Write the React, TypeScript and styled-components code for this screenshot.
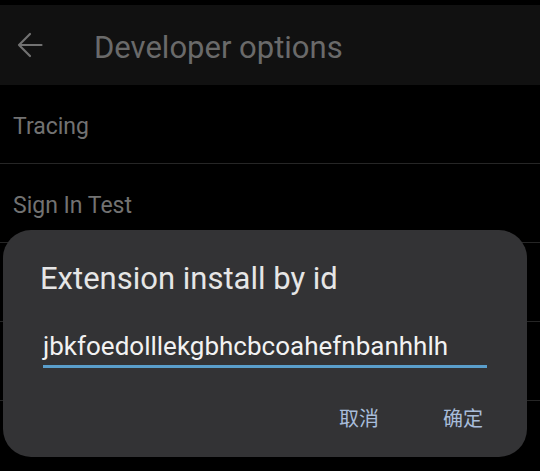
import React from 'react';
import styled, { createGlobalStyle } from 'styled-components';

const GlobalStyle = createGlobalStyle`
  html, body {
    margin: 0;
    padding: 0;
    background: #000;
  }
  body {
    font-family: Roboto, "Noto Sans CJK SC", sans-serif;
  }
`;

const Screen = styled.div`
  position: relative;
  width: 540px;
  height: 471px;
  overflow: hidden;
  background: #000;
`;

const StatusStrip = styled.div`
  height: 5px;
  background: #000;
`;

const AppBar = styled.div`
  height: 80px;
  background: #111111;
  display: flex;
  align-items: center;
  padding-left: 17px;
  gap: 51px;
  color: #6a6a6a;
`;

const Title = styled.div`
  font-size: 31px;
  margin-top: 4px;
`;

const List = styled.div`
  display: flex;
  flex-direction: column;
`;

const Row = styled.div`
  height: 79px;
  border-bottom: 1px solid #262626;
  display: flex;
  align-items: center;
  padding: 4px 0 0 13px;
  box-sizing: border-box;
  font-size: 23px;
  color: #727272;
`;

const Overlay = styled.div`
  position: absolute;
  inset: 0;
  display: flex;
  flex-direction: column;
  justify-content: flex-end;
  padding: 0 13px 14px 3px;
`;

const Dialog = styled.div`
  height: 227px;
  background: #333335;
  border-radius: 28px;
  padding: 31px 40px 0 37px;
  box-sizing: border-box;
  display: flex;
  flex-direction: column;
`;

const DialogTitle = styled.div`
  font-size: 31px;
  color: #e6e6e6;
  line-height: 36px;
`;

const Field = styled.div`
  margin-top: 33px;
  margin-left: 3px;
  padding-bottom: 3px;
  border-bottom: 3px solid #5a9ecb;
  font-size: 26px;
  line-height: 32px;
  color: #f2f2f2;
`;

const Actions = styled.div`
  display: flex;
  justify-content: flex-end;
  gap: 64px;
  margin-top: 36px;
  padding-right: 4px;
`;

const ActionButton = styled.span`
  font-family: "Noto Sans CJK SC", sans-serif;
  font-size: 20px;
  line-height: 28px;
  color: #a8bddb;
`;

function BackArrow() {
  return (
    <svg width="26" height="26" viewBox="0 0 26 26" fill="none">
      <path
        d="M24.5 13H2M13 2L2 13L13 24"
        stroke="#727272"
        strokeWidth="2.2"
        strokeLinecap="round"
        strokeLinejoin="round"
      />
    </svg>
  );
}

const rows = ['Tracing', 'Sign In Test', '', '', ''];

export default function App() {
  return (
    <Screen>
      <GlobalStyle />
      <StatusStrip />
      <AppBar>
        <BackArrow />
        <Title>Developer options</Title>
      </AppBar>
      <List>
        {rows.map((label, i) => (
          <Row key={i}>{label}</Row>
        ))}
      </List>
      <Overlay>
        <Dialog>
          <DialogTitle>Extension install by id</DialogTitle>
          <Field>jbkfoedolllekgbhcbcoahefnbanhhlh</Field>
          <Actions>
            <ActionButton>取消</ActionButton>
            <ActionButton>确定</ActionButton>
          </Actions>
        </Dialog>
      </Overlay>
    </Screen>
  );
}
